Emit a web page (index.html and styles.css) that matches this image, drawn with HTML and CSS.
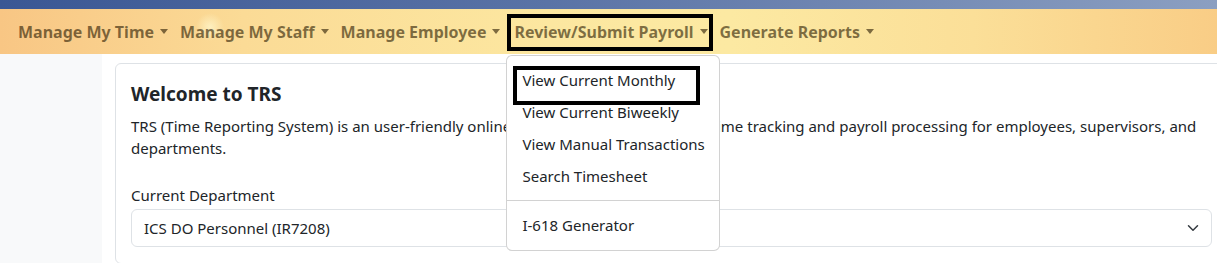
FILE: index.html
```html
<!DOCTYPE html>
<html lang="en">
<head>
  <meta charset="UTF-8">
  <title>TRS</title>
  <link rel="stylesheet" href="styles.css">
</head>
<body>

  <div class="topbar"></div>

  <nav class="navbar">
    <a class="nav-link">Manage My Time</a>
    <a class="nav-link">Manage My Staff</a>
    <a class="nav-link">Manage Employee</a>
    <div class="nav-drop">
      <a class="nav-link">Review/Submit Payroll</a>
      <span class="mark mark-nav"></span>
      <ul class="dropdown-menu">
        <li><a class="dropdown-item">View Current Monthly</a></li>
        <li><a class="dropdown-item">View Current Biweekly</a></li>
        <li><a class="dropdown-item">View Manual Transactions</a></li>
        <li><a class="dropdown-item">Search Timesheet</a></li>
        <li><hr class="dropdown-divider"></li>
        <li><a class="dropdown-item">I-618 Generator</a></li>
        <span class="mark mark-item"></span>
      </ul>
    </div>
    <a class="nav-link">Generate Reports</a>
  </nav>

  <div class="page">
    <div class="side"></div>
    <main class="content">
      <div class="card">
        <h5 class="card-title">Welcome to TRS</h5>
        <p class="card-text">TRS (Time Reporting System) is an user-friendly online platform which streamlines time tracking and payroll processing for employees, supervisors, and departments.</p>
        <label class="form-label" for="dept">Current Department</label>
        <div class="select">
          <span>ICS DO Personnel (IR7208)</span>
          <svg width="16" height="16" viewBox="0 0 16 16"><path fill="none" stroke="#343a40" stroke-linecap="round" stroke-linejoin="round" stroke-width="2" d="m2 5 6 6 6-6"/></svg>
        </div>
      </div>
    </main>
  </div>

</body>
</html>
```

FILE: styles.css
```css
body {
  margin: 0;
  font-family: "Noto Sans", sans-serif;
  font-size: 16px;
  color: #212529;
  background: #f8f9fa;
  height: 263px;
  overflow: hidden;
}

.topbar {
  height: 9px;
  background: linear-gradient(to right, #3a5794, #5a73a6 45%, #8b9fc1);
}

.navbar {
  display: flex;
  align-items: stretch;
  height: 45px;
  padding: 0 12px;
  background:
    radial-gradient(circle at 210px 18px, rgba(255, 250, 210, 0.7) 0, rgba(255, 250, 210, 0) 14px),
    linear-gradient(to right, #f8c684, #fbdb96 20%, #fce7a0 45%, #fce9a2 60%, #fbdf98 80%, #f9cd86);
  position: relative;
  z-index: 2;
}

.nav-link {
  display: flex;
  align-items: center;
  padding: 0 6px;
  font-weight: 700;
  font-size: 16px;
  color: rgba(40, 25, 0, 0.6);
  white-space: nowrap;
}

.nav-link::after {
  content: "";
  margin-left: 6px;
  border-top: 5px solid;
  border-left: 4px solid transparent;
  border-right: 4px solid transparent;
}

.nav-drop {
  position: relative;
  display: flex;
  margin-left: 2px;
}

.mark {
  position: absolute;
  box-sizing: border-box;
  border: 4px solid #000;
  pointer-events: none;
}

.mark-nav {
  left: -1px;
  top: 5px;
  width: 206px;
  height: 37px;
}

.dropdown-menu {
  position: absolute;
  left: -2px;
  top: calc(100% + 1px);
  width: 214px;
  box-sizing: border-box;
  margin: 0;
  padding: 8px 0 9px;
  list-style: none;
  background: #fff;
  border: 1px solid rgba(0, 0, 0, 0.175);
  border-radius: 6px;
}

.dropdown-item {
  display: block;
  padding: 4px 15px;
  line-height: 24px;
  font-size: 15px;
  white-space: nowrap;
}

.dropdown-divider {
  margin: 8px 0 8px;
  border: 0;
  border-top: 1px solid rgba(0, 0, 0, 0.175);
}

.mark-item {
  left: 6px;
  top: 10px;
  width: 187px;
  height: 39px;
}

.page {
  display: flex;
}

.side {
  width: 102px;
  flex-shrink: 0;
}

.content {
  flex: 1;
  background: #fff;
  padding: 9px 0 0 13px;
  height: 200px;
}

.card {
  border: 1px solid #dee2e6;
  border-radius: 6px;
  padding: 16px 16px 16px 15px;
  margin-right: -12px;
}

.card-title {
  margin: 1px 0 8px;
  font-size: 19px;
  font-weight: 700;
  line-height: 26px;
}

.card-text {
  margin: 0 0 24px;
  font-size: 15px;
  line-height: 22px;
}

.form-label {
  display: block;
  margin-bottom: 2px;
  font-size: 15px;
  line-height: 24px;
}

.select {
  display: flex;
  align-items: center;
  justify-content: space-between;
  height: 36px;
  padding: 0 12px 0 12px;
  border: 1px solid #dee2e6;
  border-radius: 6px;
  font-size: 15px;
}

.select svg {
  width: 12px;
  height: 12px;
}
```
